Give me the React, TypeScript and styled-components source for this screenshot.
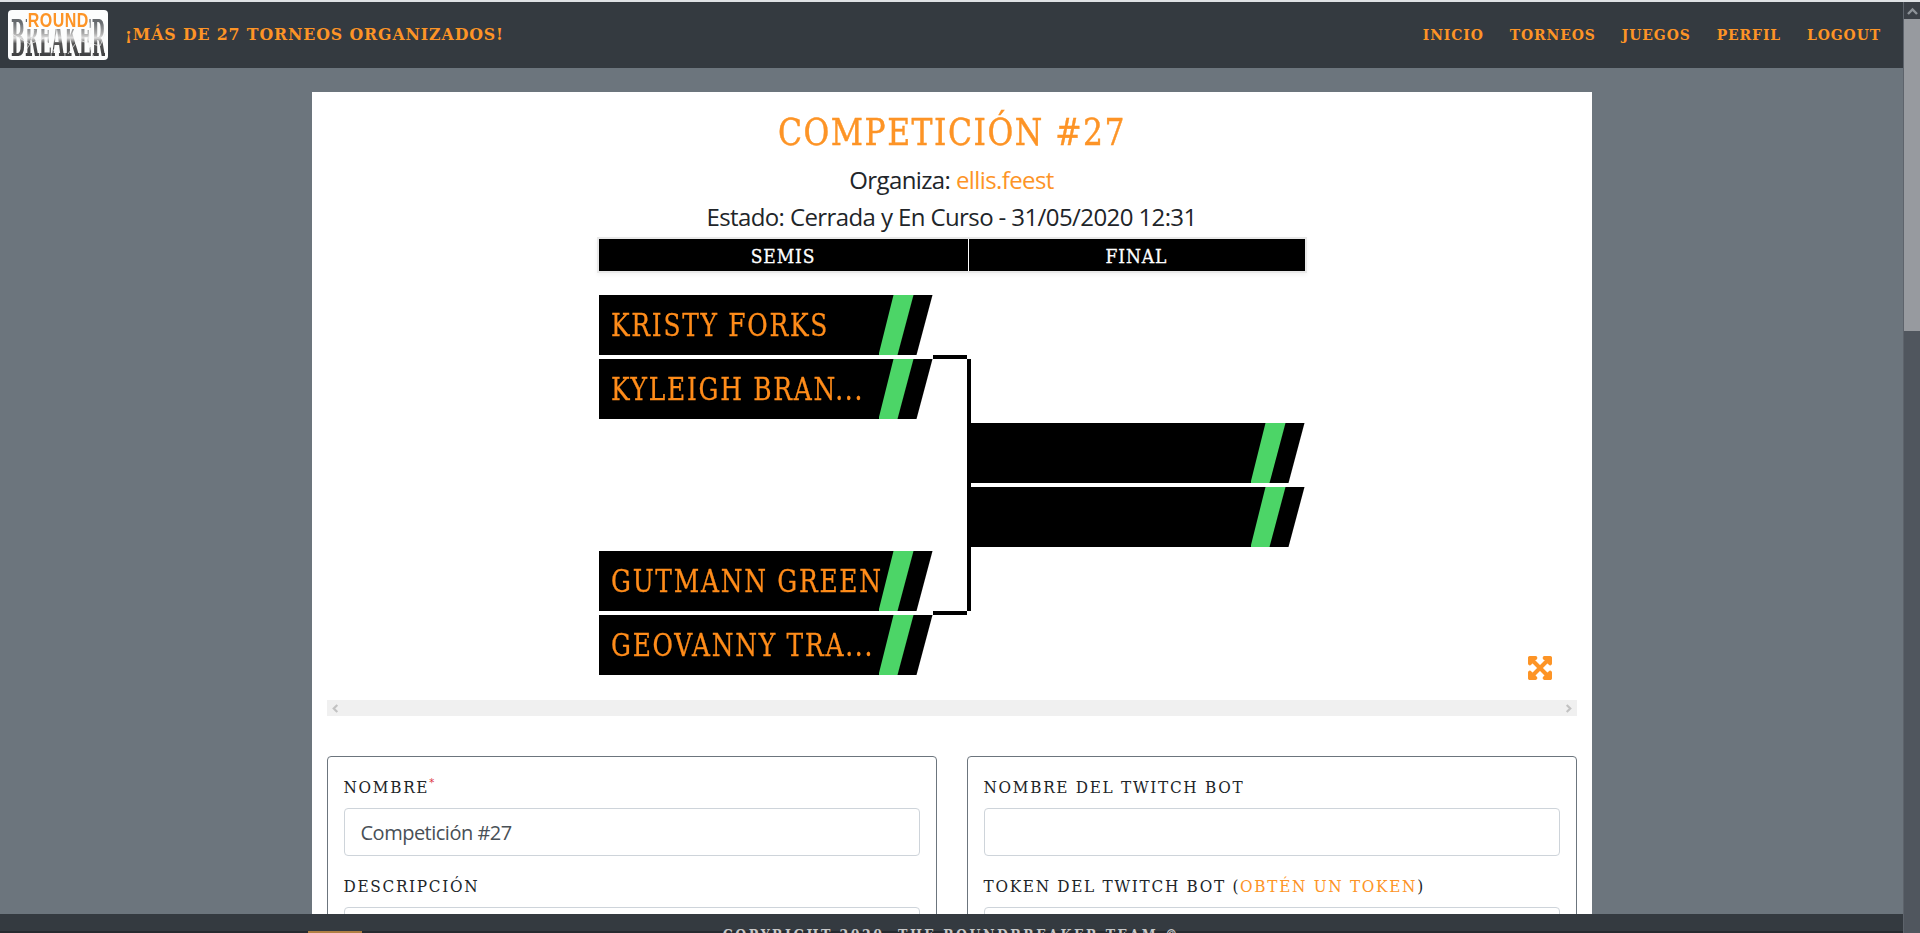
import styled, { createGlobalStyle } from "styled-components";
import { FaExpandArrowsAlt } from "react-icons/fa";

const ORANGE = "#fd9426";
const SLAB = `"DejaVu Serif Condensed", "DejaVu Serif", "Liberation Serif", serif`;

const GlobalStyle = createGlobalStyle`
  html, body {
    margin: 0;
    height: 100%;
    overflow: hidden;
    background: #6c757d;
  }
  * {
    box-sizing: border-box;
  }
  body {
    font-family: "Open Sans", "Noto Sans", sans-serif;
    color: #212529;
  }
`;

const Shell = styled.div`
  height: 933px;
  display: flex;
  flex-direction: column;
`;

const TopStrip = styled.div`
  height: 2px;
  flex: none;
  background: #dfe2e5;
`;

const Body = styled.div`
  flex: 1;
  min-height: 0;
  display: flex;
`;

const Viewport = styled.div`
  flex: 1;
  min-width: 0;
  display: flex;
  flex-direction: column;
`;

const Scrollbar = styled.div`
  width: 17px;
  flex: none;
  background: #50565e;
  border-left: 1px solid #5d636b;
  display: flex;
  flex-direction: column;
`;

const ScrollButton = styled.div`
  height: 17px;
  background: #3b4047;
  color: #8d9298;
  display: flex;
  align-items: center;
  justify-content: center;
`;

const ScrollThumb = styled.div`
  height: 312px;
  background: #979a9f;
`;

const Header = styled.header`
  height: 66px;
  flex: none;
  background: #343a40;
  display: flex;
  align-items: center;
  padding: 0 22px 0 8px;
`;

const Logo = styled.div`
  position: relative;
  width: 100px;
  height: 50px;
  background: #fcfdfd;
  border-radius: 4px;
  overflow: hidden;
  flex: none;
`;

const LogoRound = styled.span`
  position: absolute;
  left: 19px;
  top: 1px;
  z-index: 1;
  padding: 0 1px;
  background: #fcfdfd;
  font: 700 20px/18px "Liberation Sans", sans-serif;
  letter-spacing: 0.6px;
  color: ${ORANGE};
  transform: scaleX(0.8);
  transform-origin: left top;
`;

const LogoBreaker = styled.span`
  position: absolute;
  left: 3px;
  top: 1px;
  font: 700 50px/56px ${SLAB};
  transform: scaleX(0.37);
  transform-origin: left top;
  white-space: nowrap;
  background: linear-gradient(#666a6e 20%, #aaa 40%, #ddd 48%, #555 58%, #2a2d30 100%);
  -webkit-background-clip: text;
  background-clip: text;
  color: transparent;
`;

const LogoCracks = styled.svg`
  position: absolute;
  inset: 0;
  z-index: 2;
`;

const Tagline = styled.div`
  margin-left: 17px;
  font: 700 17.5px/1 ${SLAB};
  letter-spacing: 0.9px;
  color: ${ORANGE};
  white-space: nowrap;
`;

const Nav = styled.nav`
  margin-left: auto;
  display: flex;
  gap: 26px;
`;

const NavLink = styled.a`
  font: 700 15.5px/1 ${SLAB};
  letter-spacing: 0.9px;
  color: ${ORANGE};
`;

const Content = styled.main`
  flex: 1;
  min-height: 0;
  overflow: hidden;
  padding-top: 24px;
`;

const Container = styled.div`
  width: 1280px;
  margin: 0 auto;
  background: #fff;
  padding: 16px 15px 0;
`;

const Title = styled.h1`
  margin: 0 0 9px;
  font: 400 38px/48px ${SLAB};
  letter-spacing: 1.6px;
  text-align: center;
  color: ${ORANGE};
  -webkit-text-stroke: 0.4px ${ORANGE};
  transform: scaleX(0.92);
`;

const InfoLine = styled.p`
  margin: 0 0 7px;
  font-size: 24px;
  line-height: 30px;
  letter-spacing: -0.6px;
  text-align: center;

  & + & {
    margin-bottom: 5px;
  }

  a {
    color: ${ORANGE};
  }
`;

const BracketScroller = styled.div`
  position: relative;
  display: flex;
  flex-direction: column;
  align-items: center;
`;

const RoundHeader = styled.div`
  width: 710px;
  height: 36px;
  display: flex;
  gap: 1px;
  border: 2px solid #e8e8e8;
  background: #fff;
  box-shadow: 0 2px 4px rgba(0, 0, 0, 0.05);
`;

const RoundCell = styled.div<{ $width: number }>`
  width: ${(p) => p.$width}px;
  background: #000;
  color: #fff;
  font: 400 19px/34px ${SLAB};
  letter-spacing: 0.9px;
  text-align: center;
  -webkit-text-stroke: 0.3px #fff;
`;

const Bracket = styled.div`
  width: 706px;
  margin-top: 22px;
  display: flex;
`;

const SemisColumn = styled.div`
  width: 334px;
  display: flex;
  flex-direction: column;
  gap: 132px;
`;

const Pair = styled.div`
  display: flex;
  flex-direction: column;
  gap: 4px;
`;

const Connector = styled.div`
  width: 38px;
  margin-top: 60px;
  height: 260px;
  display: flex;
  flex-direction: column;
`;

const ConnectorStub = styled.div`
  width: 34px;
  height: 4px;
  background: #000;
`;

const ConnectorSpine = styled.div`
  flex: 1;
  width: 4px;
  margin-left: 34px;
  background: #000;
`;

const FinalColumn = styled.div`
  width: 334px;
  padding-top: 128px;
`;

const Match = styled.div`
  position: relative;
  width: 334px;
  height: 60px;
  background: #000;
  clip-path: polygon(0 0, 100% 0, 318px 100%, 0 100%);
  padding-left: 12px;

  &::after {
    content: "";
    position: absolute;
    top: 0;
    left: 280px;
    width: 35px;
    height: 100%;
    background: #4cd567;
    clip-path: polygon(15px 0, 35px 0, 19px 100%, 0 100%);
  }
`;

const MatchName = styled.div`
  width: 316px;
  white-space: nowrap;
  font: 400 32px/60px ${SLAB};
  letter-spacing: 2px;
  color: #ff8c1a;
  -webkit-text-stroke: 0.3px #ff8c1a;
  transform: scaleX(0.865);
  transform-origin: left center;
`;

const ExpandButton = styled.span`
  position: absolute;
  right: 24px;
  top: 418px;
  color: ${ORANGE};
  display: flex;

  svg {
    stroke: currentColor;
    stroke-width: 24;
  }
`;

const HScroll = styled.div`
  align-self: stretch;
  margin-top: 25px;
  height: 16px;
  background: #f0f0f0;
  color: #c2c2c2;
  display: flex;
  align-items: center;
  justify-content: space-between;
  padding: 0 4px;
`;

const Forms = styled.div`
  margin-top: 40px;
  display: grid;
  grid-template-columns: 610px 610px;
  gap: 30px;
`;

const Card = styled.section`
  border: 1px solid #6c757d;
  border-radius: 4px;
  padding: 16px 16px 0;
`;

const Field = styled.div`
  margin-bottom: 16px;
`;

const Label = styled.label`
  display: block;
  padding-top: 1px;
  margin-bottom: 7px;
  font: 400 17px/27px ${SLAB};
  letter-spacing: 1.7px;
  color: #212529;

  a {
    color: ${ORANGE};
  }
`;

const Required = styled.sup`
  color: #dc3545;
  font-size: 11px;
  line-height: 0;
`;

const Input = styled.input`
  display: block;
  width: 100%;
  height: 48px;
  padding: 0 16px;
  border: 1px solid #ced4da;
  border-radius: 4px;
  background: #fff;
  font-family: "Open Sans", "Noto Sans", sans-serif;
  font-size: 20px;
  letter-spacing: -0.5px;
  color: #495057;
`;

const Footer = styled.footer`
  position: relative;
  height: 19px;
  flex: none;
  background: #343a40;
  box-shadow: inset 0 -2px 0 #262a2f;
  overflow: hidden;
  padding-top: 14px;
  text-align: center;
  font: 700 14px/1 ${SLAB};
  letter-spacing: 2.45px;
  color: #c8c8c8;
`;

const FooterTab = styled.div`
  position: absolute;
  left: 308px;
  bottom: 0;
  width: 54px;
  height: 2px;
  background: #b07f42;
`;

const Chevron = ({ d }: { d: string }) => (
  <svg width="9" height="9" viewBox="0 0 10 10" fill="none" stroke="currentColor" strokeWidth="2.4">
    <path d={d} />
  </svg>
);

const Entry = ({ name }: { name?: string }) => (
  <Match>{name && <MatchName>{name}</MatchName>}</Match>
);

export default function App() {
  return (
    <>
      <GlobalStyle />
      <Shell>
        <TopStrip />
        <Body>
          <Viewport>
            <Header>
              <Logo>
                <LogoBreaker>BREAKER</LogoBreaker>
                <LogoRound>ROUND</LogoRound>
                <LogoCracks width="100" height="50" viewBox="0 0 100 50" fill="none" stroke="#f4f4f4" strokeWidth="0.7">
                  <path d="M4 24 L22 34 L36 28 L50 46" />
                  <path d="M14 46 L22 34 L26 20" />
                  <path d="M60 44 L70 30 L92 36 L97 24" />
                  <path d="M84 14 L80 32 L86 48" />
                </LogoCracks>
              </Logo>
              <Tagline>¡MÁS DE 27 TORNEOS ORGANIZADOS!</Tagline>
              <Nav>
                <NavLink>INICIO</NavLink>
                <NavLink>TORNEOS</NavLink>
                <NavLink>JUEGOS</NavLink>
                <NavLink>PERFIL</NavLink>
                <NavLink>LOGOUT</NavLink>
              </Nav>
            </Header>
            <Content>
              <Container>
                <Title>COMPETICIÓN #27</Title>
                <InfoLine>
                  Organiza: <a>ellis.feest</a>
                </InfoLine>
                <InfoLine>Estado: Cerrada y En Curso - 31/05/2020 12:31</InfoLine>
                <BracketScroller>
                  <RoundHeader>
                    <RoundCell $width={369}>SEMIS</RoundCell>
                    <RoundCell $width={336}>FINAL</RoundCell>
                  </RoundHeader>
                  <Bracket>
                    <SemisColumn>
                      <Pair>
                        <Entry name="KRISTY FORKS" />
                        <Entry name="KYLEIGH BRAN..." />
                      </Pair>
                      <Pair>
                        <Entry name="GUTMANN GREEN" />
                        <Entry name="GEOVANNY TRA..." />
                      </Pair>
                    </SemisColumn>
                    <Connector>
                      <ConnectorStub />
                      <ConnectorSpine />
                      <ConnectorStub />
                    </Connector>
                    <FinalColumn>
                      <Pair>
                        <Entry />
                        <Entry />
                      </Pair>
                    </FinalColumn>
                  </Bracket>
                  <ExpandButton>
                    <FaExpandArrowsAlt size={26} />
                  </ExpandButton>
                  <HScroll>
                    <Chevron d="M7 1 L3 5 L7 9" />
                    <Chevron d="M3 1 L7 5 L3 9" />
                  </HScroll>
                </BracketScroller>
                <Forms>
                  <Card>
                    <Field>
                      <Label>
                        NOMBRE<Required>*</Required>
                      </Label>
                      <Input defaultValue="Competición #27" />
                    </Field>
                    <Field>
                      <Label>DESCRIPCIÓN</Label>
                      <Input />
                    </Field>
                  </Card>
                  <Card>
                    <Field>
                      <Label>NOMBRE DEL TWITCH BOT</Label>
                      <Input />
                    </Field>
                    <Field>
                      <Label>
                        TOKEN DEL TWITCH BOT (<a>OBTÉN UN TOKEN</a>)
                      </Label>
                      <Input />
                    </Field>
                  </Card>
                </Forms>
              </Container>
            </Content>
            <Footer>
              COPYRIGHT 2020, THE ROUNDBREAKER TEAM ©
              <FooterTab />
            </Footer>
          </Viewport>
          <Scrollbar>
            <ScrollButton>
              <svg width="11" height="8" viewBox="0 0 11 8" fill="none" stroke="currentColor" strokeWidth="2.4">
                <path d="M1 7 L5.5 2.5 L10 7" />
              </svg>
            </ScrollButton>
            <ScrollThumb />
          </Scrollbar>
        </Body>
      </Shell>
    </>
  );
}
